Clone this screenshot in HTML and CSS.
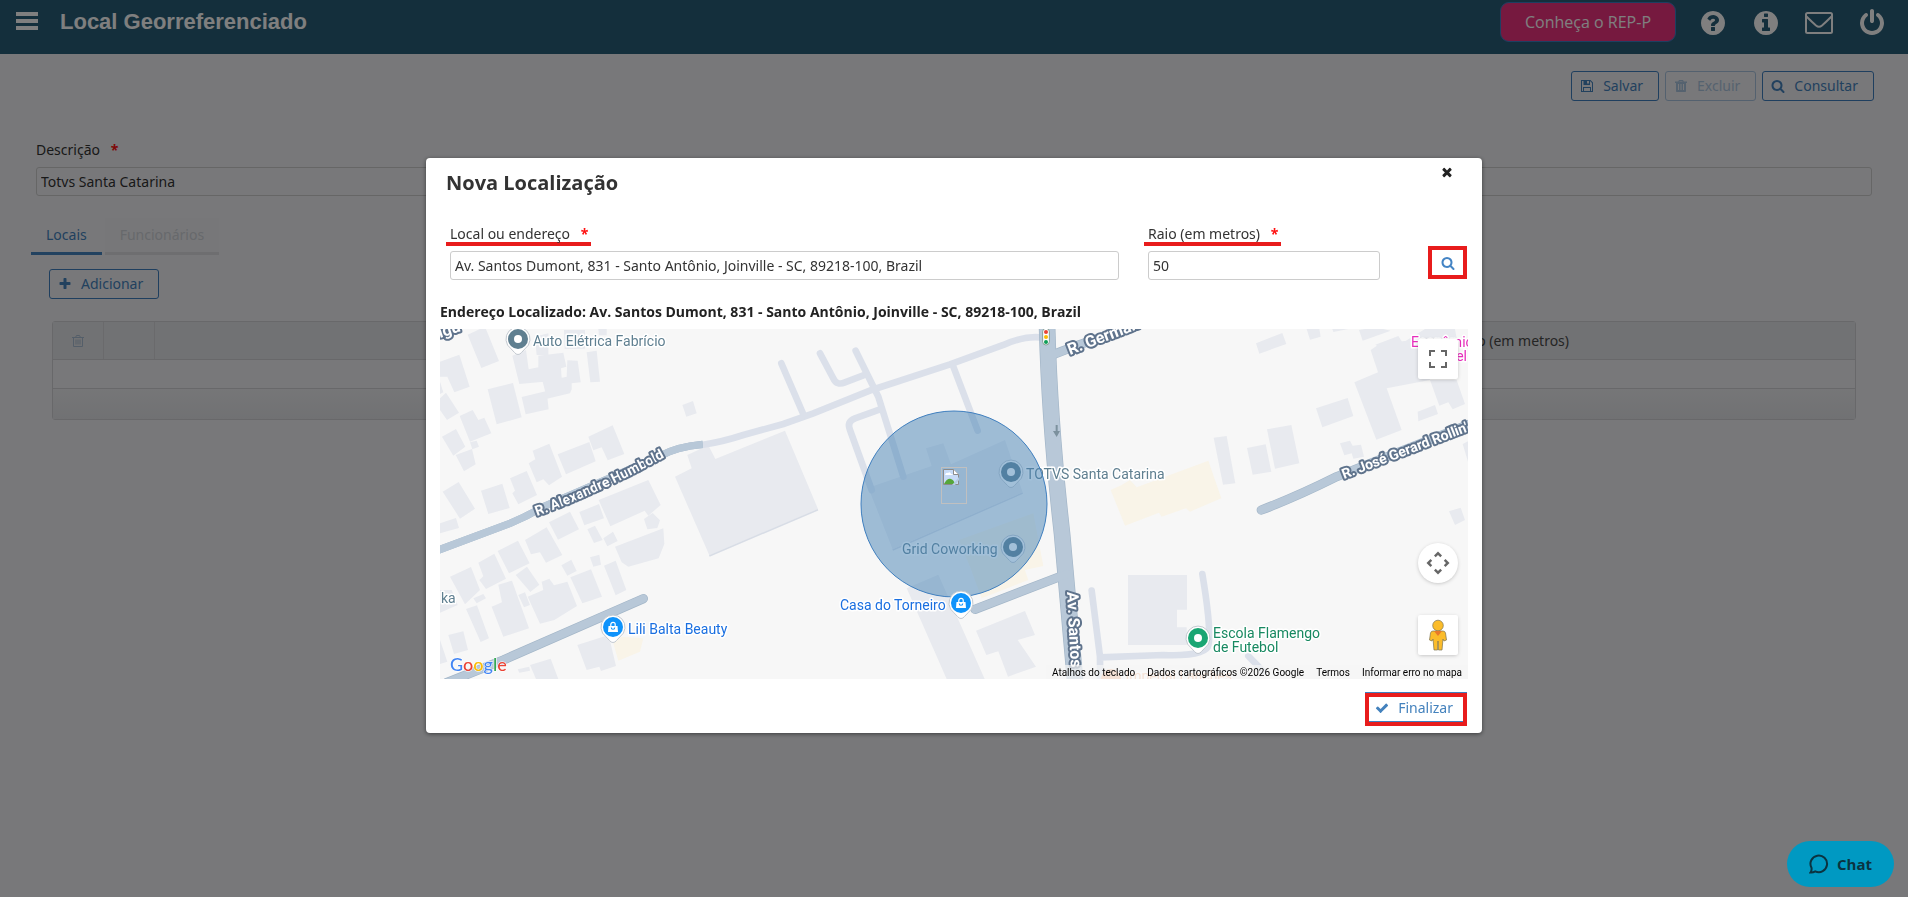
FILE: index.html
```html
<!DOCTYPE html>
<html lang="pt-BR">
<head>
<meta charset="utf-8">
<meta name="viewport" content="width=device-width, initial-scale=1">
<title>Local Georreferenciado</title>
<link rel="stylesheet" href="styles.css">
</head>
<body>
<svg class="defs" aria-hidden="true">
  <symbol id="i-search" viewBox="0 0 1792 1792"><path d="M1216 832q0-185-131.5-316.5t-316.5-131.5-316.5 131.5-131.5 316.5 131.5 316.5 316.5 131.5 316.5-131.5 131.5-316.5zm512 832q0 52-38 90t-90 38q-54 0-90-38l-343-342q-179 124-399 124-143 0-273.5-55.5t-225-150-150-225-55.5-273.5 55.5-273.5 150-225 225-150 273.5-55.5 273.5 55.5 225 150 150 225 55.5 273.5q0 220-124 399l343 343q37 37 37 90z"/></symbol>
  <symbol id="i-plus" viewBox="0 0 1792 1792"><path d="M1600 736v192q0 40-28 68t-68 28h-416v416q0 40-28 68t-68 28h-192q-40 0-68-28t-28-68v-416h-416q-40 0-68-28t-28-68v-192q0-40 28-68t68-28h416v-416q0-40 28-68t68-28h192q40 0 68 28t28 68v416h416q40 0 68 28t28 68z"/></symbol>
  <symbol id="i-check" viewBox="0 0 1792 1792"><path d="M1671 566q0 40-28 68l-724 724-136 136q-28 28-68 28t-68-28l-136-136-362-362q-28-28-28-68t28-68l136-136q28-28 68-28t68 28l294 295 656-657q28-28 68-28t68 28l136 136q28 28 28 68z"/></symbol>
  <symbol id="i-times" viewBox="0 0 1792 1792"><path d="M1490 1322q0 40-28 68l-136 136q-28 28-68 28t-68-28l-294-294-294 294q-28 28-68 28t-68-28l-136-136q-28-28-28-68t28-68l294-294-294-294q-28-28-28-68t28-68l136-136q28-28 68-28t68 28l294 294 294-294q28-28 68-28t68 28l136 136q28 28 28 68t-28 68l-294 294 294 294q28 28 28 68z"/></symbol>
  <symbol id="i-power" viewBox="0 0 1792 1792"><path d="M1664 896q0 156-61 298t-164 245-245 164-298 61-298-61-245-164-164-245-61-298q0-182 80.5-343t226.5-270q43-32 95.5-25t83.5 50q32 42 24.5 94.5t-49.5 84.5q-98 74-151.5 181t-53.5 228q0 104 40.5 198.5t109.5 163.5 163.5 109.5 198.5 40.5 198.5-40.5 163.5-109.5 109.5-163.5 40.5-198.5q0-121-53.5-228t-151.5-181q-42-32-49.5-84.5t24.5-94.5q31-43 84-50t95 25q146 109 226.5 270t80.5 343zm-640-768v640q0 52-38 90t-90 38-90-38-38-90v-640q0-52 38-90t90-38 90 38 38 90z"/></symbol>
  <symbol id="i-info" viewBox="0 0 1792 1792"><path d="M1152 1376v-160q0-14-9-23t-23-9h-96v-512q0-14-9-23t-23-9h-320q-14 0-23 9t-9 23v160q0 14 9 23t23 9h96v320h-96q-14 0-23 9t-9 23v160q0 14 9 23t23 9h448q14 0 23-9t9-23zm-128-896v-160q0-14-9-23t-23-9h-192q-14 0-23 9t-9 23v160q0 14 9 23t23 9h192q14 0 23-9t9-23zm640 416q0 209-103 385.5t-279.5 279.5-385.5 103-385.5-103-279.5-279.5-103-385.5 103-385.5 279.5-279.5 385.5-103 385.5 103 279.5 279.5 103 385.5z"/></symbol>
  <symbol id="i-help" viewBox="0 0 1792 1792"><path d="M1024 1376v-192q0-14-9-23t-23-9h-192q-14 0-23 9t-9 23v192q0 14 9 23t23 9h192q14 0 23-9t9-23zm256-672q0-88-55.5-163t-138.5-116-170-41q-243 0-371 213-15 24 8 42l132 100q7 6 19 6 16 0 25-12 53-68 86-92 34-24 86-24 48 0 85.5 26t37.5 59q0 38-20 61t-68 45q-63 28-115.5 86.5t-52.5 125.5v36q0 14 9 23t23 9h192q14 0 23-9t9-23q0-19 21.5-49.5t54.5-49.5q32-18 49-28.5t46-35 44.5-48 28-60.5 12.5-81zm384 192q0 209-103 385.5t-279.5 279.5-385.5 103-385.5-103-279.5-279.5-103-385.5 103-385.5 279.5-279.5 385.5-103 385.5 103 279.5 279.5 103 385.5z"/></symbol>
  <symbol id="i-mail" viewBox="0 0 28 28"><g fill="none" stroke="currentColor" stroke-width="2"><rect x="1" y="4" width="26" height="20" rx="1.500"/><path d="M1.500 7.500 Q7 13 11 16.500 Q14 19 17 16.500 Q21 13 26.500 7.500"/></g></symbol>
  <symbol id="i-save" viewBox="0 0 14 14"><path fill-rule="evenodd" d="M1 1h9.500L13 3.500V13H1zM2 2v10h1V8h8v4h1V4l-2-2v4H3.500V2zm5 0v2.500h2V2zM4 9v3h6V9z"/></symbol>
  <symbol id="i-trash" viewBox="0 0 14 14"><path fill-rule="evenodd" d="M5 1h4l.8 1.500H13V4h-1v8.200q0 .8-.8.800H2.800q-.8 0-.8-.8V4H1V2.500h3.200zM5.400 2.500h3.200L8.300 2H5.700zM4 5v6h1V5zm2.500 0v6h1V5zM9 5v6h1V5z"/></symbol>
  <symbol id="i-trash-o" viewBox="0 0 14 14"><path fill="none" stroke="currentColor" d="M1 3.500h12M2.500 3.500v9h9v-9M4.500 3.500l1-2h3l1 2M5 5.500v5M7 5.500v5M9 5.500v5"/></symbol>
  <symbol id="pin" viewBox="-14 -14 28 32" overflow="visible"><path class="pin-body" d="M0 15.500Q-2 15.500-3.500 13.500L-7 9.800A12 12 0 1 1 7 9.800L3.500 13.500Q2 15.500 0 15.500z"/><circle r="10" fill="currentColor"/></symbol>
  <symbol id="bag" viewBox="-7 -7 14 14"><path fill="#fff" fill-rule="evenodd" d="M-4.500-1h9L5 5H-5zM-2.300.5A2.300 2.300 0 0 0 2.300.5H1.200A1.200 1.200 0 0 1-1.200.5z"/><path fill="none" stroke="#fff" stroke-width="1.200" d="M-2.200-1v-1.500a2.200 2.200 0 0 1 4.400 0V-1"/></symbol>
</svg>

<header class="topbar">
  <button class="menu" type="button" aria-label="Menu"><svg viewBox="0 0 22 18"><path d="M0 0h22v4H0zM0 7h22v4H0zM0 14h22v4H0z"/></svg></button>
  <h1 class="topbar-title">Local Georreferenciado</h1>
  <button class="promo" type="button">Conheça o REP-P</button>
  <nav class="topbar-icons">
    <a href="#" aria-label="Ajuda"><svg><use href="#i-help"/></svg></a>
    <a href="#" aria-label="Informações"><svg><use href="#i-info"/></svg></a>
    <a href="#" aria-label="Mensagens"><svg><use href="#i-mail"/></svg></a>
    <a href="#" aria-label="Sair"><svg><use href="#i-power"/></svg></a>
  </nav>
</header>

<main class="page">
  <div class="actions">
    <button class="btn" type="button"><svg><use href="#i-save"/></svg>Salvar</button>
    <button class="btn" type="button" disabled><svg><use href="#i-trash"/></svg>Excluir</button>
    <button class="btn" type="button"><svg><use href="#i-search"/></svg>Consultar</button>
  </div>
  <label class="label" for="descricao">Descrição <b class="req">*</b></label>
  <input class="input" id="descricao" type="text" value="Totvs Santa Catarina">
  <div class="tabs" role="tablist">
    <button class="tab tab-active" type="button" role="tab" aria-selected="true">Locais</button>
    <button class="tab" type="button" role="tab" disabled>Funcionários</button>
  </div>
  <section class="panel">
    <button class="btn" type="button"><svg><use href="#i-plus"/></svg>Adicionar</button>
    <table class="grid">
      <thead><tr><th class="col-icon"><svg class="trash"><use href="#i-trash-o"/></svg></th><th class="col-icon"></th><th></th><th class="col-radius">Raio (em metros)</th></tr></thead>
      <tbody><tr><td colspan="4"></td></tr></tbody>
      <tfoot><tr><td colspan="4"></td></tr></tfoot>
    </table>
  </section>
</main>

<div class="overlay">
  <section class="modal" role="dialog" aria-labelledby="modal-title">
    <header class="modal-head">
      <h2 class="modal-title" id="modal-title">Nova Localização</h2>
      <button class="close" type="button" aria-label="Fechar"><svg><use href="#i-times"/></svg></button>
    </header>
    <form class="form">
      <div class="field field-address">
        <label class="label marked" for="endereco">Local ou endereço <b class="req">*</b></label>
        <input class="input" id="endereco" type="text" value="Av. Santos Dumont, 831 - Santo Antônio, Joinville - SC, 89218-100, Brazil">
      </div>
      <div class="field field-radius">
        <label class="label marked" for="raio">Raio (em metros) <b class="req">*</b></label>
        <input class="input" id="raio" type="text" value="50">
      </div>
      <button class="search" type="button" aria-label="Pesquisar"><svg><use href="#i-search"/></svg></button>
    </form>
    <p class="found">Endereço Localizado: Av. Santos Dumont, 831 - Santo Antônio, Joinville - SC, 89218-100, Brazil</p>

    <div class="map">
      <svg class="map-art" viewBox="0 0 1028 350" preserveAspectRatio="xMidYMid slice">
        <g transform="translate(-10 -9) scale(.333333)">
          <g class="building">
            <path d="M113 44L165 20 207 123 154 144zM30 125L88 104 119 200 73 217 52 170 30 170zM30 235L48 218 87 278 51 300 30 270zM30 185L40 217 30 222zM173 208L249 189 275 292 200 313zM275 231L350 213 356 268 287 283zM247 107L288 90 296 148 325 142V107L400 98 409 140 393 145 395 175 342 185 268 192zM338 185L410 170 412 121 443 122 452 187 425 190 425 208 420 220 351 236zM314 50L355 40V105H320zM402 30H465V86L404 87zM470 97L500 92 510 185 481 187zM505 27H530V46H507zM89 288L128 270 145 300 163 293 184 340 120 365zM36 350L78 327 106 380 70 407zM77 405L126 387 137 433 102 454zM120 367L140 362 147 380 127 388zM383 403L478 366 497 424 408 463zM475 350L548 316 583 402 533 421 515 382 490 391zM308 392L358 371 396 470 357 496 340 478 320 487 296 430 316 418zM240 475L290 453 321 525 265 553 247 520 255 512zM153 512L217 491 239 564 175 582zM38 515L86 486 135 566 90 596zM30 610L78 594 87 624 30 640zM757 255L789 243 800 280 769 290zM506 540L655 480 692 555 655 587 644 572 541 619zM448 576L507 552 522 595 463 616zM357 607L420 575 447 628 384 659zM642 597L668 579 690 601 682 624 652 628zM472 628L495 617 518 660 492 669zM520 655L549 635 563 663 532 679zM555 680L700 625 703 672 686 715 595 740 575 727zM285 660L350 622 397 705 348 728 330 697 303 703zM203 693L264 662 299 730 237 760zM145 728L193 701 228 776 168 807 148 780 160 769zM60 770L123 741 150 810 105 853zM257 765L291 740 328 794 301 816zM394 736L424 719 440 753 412 767zM480 712L508 704 513 734 490 740zM522 737L557 722 589 810 557 826zM421 772L483 748 516 830 457 850zM335 785L358 776 372 796 412 785 441 858 373 900 330 911 293 830 340 810zM185 860L216 847 205 794 246 782 297 925 220 950zM265 825L285 817 300 855 282 862zM130 835L160 822 168 835 140 850zM108 867L141 856 177 955 152 966zM55 945L100 934 114 990 72 1002zM30 810L65 810 83 855 30 878zM30 960L52 1025 30 1032zM442 975L536 945 558 1038 513 1053 508 1040 470 1050zM300 1035L362 1016 385 1077H318zM263 1048L298 1040 300 1052 268 1058z"/>
            <path d="M735 470L785 445 772 405 835 376 856 417 1065 332 1164 567 838 706z"/>
          </g>
          <path class="shade" d="M838 708L1164 569M1388 690L1778 519"/>
          <g transform="translate(1050 0)">
            <path class="building" d="M265 503L455 438 438 385 490 370 513 433 675 360 728 517 338 688zM380 805L475 764 614 1077H500zM588 932L735 873 765 945 713 960 768 1040 684 1070 655 994 619 1005zM1044 765V975H1150V765z"/>
            <path class="warm" d="M537 660L760 580 790 738 735 750 745 780 605 835 570 740z"/>
          </g>
          <g transform="translate(2070 0)">
            <path class="building" d="M408 70L487 39 499 72 418 101zM560 27H598L602 50 570 59zM637 27H685L640 36zM717 30L735 27H790L812 32 728 62zM766 74L835 48 848 68 915 27H1005L1010 55 895 95 834 118zM752 90L775 74 895 57 930 180 800 205 845 330 769 359 703 187 774 157zM930 180H1010L1035 252 998 268 985 247 958 257zM588 265L683 234 700 288 607 322zM893 275L945 255 954 282 895 304zM441 328L514 315 538 430 465 446zM281 353L320 348 346 490 309 494zM381 384L437 373 454 455 398 464zM660 370L690 362 698 377 723 374 732 410 700 416 695 400 673 406zM987 574L1022 563 1035 600 1005 615zM1028 372L1044 364V425zM24 765H201V869H171V922H200V975H24z"/>
            <path class="warm" d="M-28 510L5 495 30 480 50 502 265 422 304 535 210 575 198 565 125 590 117 578 15 617z"/>
          </g>
          <path class="warm" d="M550 970L575 950 640 955 630 995 565 1022z"/>
          <g class="minor">
            <path d="M815 375Q880 365 940 345L1060 312 1150 280 1325 210 1560 133 1720 75Q1780 48 1830 52"/>
            <path d="M1054 130L1121 285M1170 100L1210 175Q1220 198 1245 187L1300 166M1277 92L1345 230 1420 470M1350 268L1275 295Q1250 305 1260 330L1325 510M1570 140L1643 332"/>
            <path d="M1985 812L2010 1010 2010 1075M2010 1012L2200 1005Q2330 1010 2335 975 2345 930 2317 762M2455 1008L2500 1055"/>
          </g>
          <g class="road-edge"><path class="blunt" d="M10 696L240 610Q290 590 340 560L480 500 690 408Q740 380 818 373"/><path d="M50 1088L220 1020 640 836M2494 570Q2600 530 2720 470L3120 312"/><path class="wide" d="M1851 10Q1858 300 1896 640L1936 1090"/><path d="M1635 868L1910 762M1855 110Q1950 70 2100 25"/></g>
          <g class="road"><path class="blunt" d="M10 696L240 610Q290 590 340 560L480 500 690 408Q740 380 818 373"/><path d="M50 1088L220 1020 640 836M2494 570Q2600 530 2720 470L3120 312"/><path class="wide" d="M1851 10Q1858 300 1896 640L1936 1090"/><path d="M1635 868L1910 762M1855 110Q1950 70 2100 25"/></g>
          <path class="arrow" d="M1877 315h6v18h7l-10 18-11-18h8z"/>
          <rect x="1838" y="25" width="20" height="50" rx="10" fill="#fff" stroke="#5f7d6d" stroke-width="2"/>
          <circle cx="1848" cy="36" r="6" fill="#e94335"/><circle cx="1848" cy="51" r="6" fill="#fbbc05"/><circle cx="1848" cy="66" r="6" fill="#0f9d58"/>
        </g>

        <path id="humbold" d="M97 187Q166 162 245 117" fill="none"/>
        <g class="street">
          <text><textPath href="#humbold">R. Alexandre Humbold</textPath></text>
          <text class="avenue" transform="translate(630 26) rotate(-21)">R. Germano</text>
          <text class="avenue" transform="translate(627 263) rotate(87)">Av. Santos</text>
          <text transform="translate(904 150) rotate(-21)">R. José Gerard Rollin'</text>
          <text class="avenue" transform="translate(0 9) rotate(-18)">igu</text>
        </g>

        <g class="poi slate">
          <use href="#pin" x="64" y="-4" width="28" height="32"/><circle class="hole" cx="78" cy="10" r="4"/>
          <text x="93" y="17">Auto Elétrica Fabrício</text>
          <text x="1" y="274">ka</text>
          <use href="#pin" x="557" y="129" width="28" height="32"/><circle class="hole" cx="571" cy="143" r="4"/>
          <text x="586" y="150">TOTVS Santa Catarina</text>
          <use href="#pin" x="559" y="204" width="28" height="32"/><circle class="hole" cx="573" cy="218" r="4"/>
          <text x="462" y="225">Grid Coworking</text>
        </g>
        <g class="poi pink"><text x="971" y="18">Econômico</text><text x="1027" y="32" text-anchor="end">Hotel</text></g>
        <g class="poi orange"><circle cx="671" cy="350" r="10" fill="currentColor"/><text x="792" y="352" text-anchor="end">Imperial Lanches</text></g>

        <circle class="radius" cx="514" cy="175" r="93"/>

        <g class="poi blue">
          <use href="#pin" x="159" y="284" width="28" height="32"/><use href="#bag" x="166" y="291" width="14" height="14"/>
          <text x="188" y="305">Lili Balta Beauty</text>
          <use href="#pin" x="507" y="260" width="28" height="32"/><use href="#bag" x="514" y="267" width="14" height="14"/>
          <text x="400" y="281">Casa do Torneiro</text>
        </g>
        <g class="poi green">
          <use href="#pin" x="744" y="295" width="28" height="32"/><circle class="hole" cx="758" cy="309" r="4"/>
          <text x="773" y="309">Escola Flamengo</text><text x="773" y="323">de Futebol</text>
        </g>

        <g transform="translate(501 138)">
          <rect x=".5" y=".5" width="25" height="36" fill="none" stroke="#c0c0c0"/>
          <path d="M2.500 2.500h10l5 5v10h-15z" fill="#c7dbf7" stroke="#8b8b8b"/>
          <path d="M3 17q3-6 7-5 3 1 4 5z" fill="#56a63a"/><path d="M4 8q1-3 3-2 2-2 3 1 2 0 2 1z" fill="#fff"/><path d="M12.500 2.500v5h5" fill="#fff" stroke="#8b8b8b"/><path d="M11 18L18 10v3l-4 5z" fill="#b4cbe2"/>
        </g>
        <text class="google" x="10" y="342"><tspan fill="#4285f4">G</tspan><tspan fill="#ea4335">o</tspan><tspan fill="#fbbc05">o</tspan><tspan fill="#4285f4">g</tspan><tspan fill="#34a853">l</tspan><tspan fill="#ea4335">e</tspan></text>
      </svg>
      <div class="map-controls">
        <button class="ctl" type="button" aria-label="Tela cheia"><svg viewBox="0 0 18 18"><path d="M0 0h6v2H2v4H0zM12 0h6v6h-2V2h-4zM0 12h2v4h4v2H0zM16 12h2v6h-6v-2h4z"/></svg></button>
        <button class="ctl ctl-round" type="button" aria-label="Controles da câmera"><svg viewBox="0 0 24 24"><path d="M12 .5l4 4L14.300 6.200 12 4 9.700 6.200 8 4.500zM12 23.500l4-4-1.700-1.700L12 20l-2.300-2.200L8 19.500zM.5 12l4-4 1.700 1.700L4 12l2.200 2.300L4.500 16zM23.500 12l-4-4-1.700 1.700L20 12l-2.200 2.300 1.700 1.700z"/></svg></button>
        <button class="ctl" type="button" aria-label="Street View"><svg class="pegman" viewBox="0 0 18 32"><g stroke="#7d7350" stroke-width=".7"><path fill="#fbbc2a" d="M4 12q-2 0-2.500 2L.5 21l2.500 1 1-2 1 11h3.500l.5-9 .5 9H13l1-11 1 2 2.500-1-1-7q-.5-2-2.500-2z"/><circle cx="9" cy="6.500" r="5.300" fill="#fbbc2a"/></g><path fill="#e8792a" d="M5 12h8l-4 5z"/></svg></button>
      </div>
      <div class="map-legal"><button type="button">Atalhos do teclado</button><span>Dados cartográficos ©2026 Google</span><a href="#">Termos</a><a href="#">Informar erro no mapa</a></div>
    </div>

    <footer class="modal-foot">
      <div class="highlight"><button class="btn finish" type="button"><svg><use href="#i-check"/></svg>Finalizar</button></div>
    </footer>
  </section>
</div>

<button class="chat" type="button"><svg viewBox="0 0 20 20"><path d="M2.500 13.800A8.300 8.300 0 1 1 6.200 17.300Q4 18.700 1.500 18.500 3 16.500 2.500 13.800z"/></svg>Chat</button>
</body>
</html>
```
FILE: styles.css
```css
* { box-sizing: border-box; }

body {
  margin: 0;
  min-height: 100vh;
  background: #f0f1f5;
  color: #333;
  font: 14px/20px "Noto Sans", "Open Sans", sans-serif;
}

button, input { font: inherit; color: inherit; }
button { cursor: pointer; }
svg { display: block; fill: currentColor; }
.defs { position: absolute; width: 0; height: 0; }

/* Top bar */
.topbar {
  display: flex;
  align-items: flex-start;
  height: 54px;
  padding: 0 22px 0 16px;
  background: #285e78;
  color: #fff;
}
.menu { padding: 0; margin-top: 12px; border: 0; background: none; }
.menu svg { width: 22px; height: 18px; }
.topbar-title { margin: 0 auto 0 22px; font: bold 22px/44px "Liberation Sans", Arial, sans-serif; }
.promo {
  height: 40px;
  margin-top: 2px;
  padding: 0 24px;
  border: 1px solid #3b7fc4;
  border-radius: 9px;
  background: #ec327e;
  font-family: "Open Sans", sans-serif;
  font-size: 16px;
}
.topbar-icons { display: flex; gap: 25px; margin: 9px 0 0 23px; }
.topbar-icons a { color: inherit; }
.topbar-icons svg { width: 28px; height: 28px; }

/* Page form */
.page { padding: 17px 36px; }
.actions { display: flex; justify-content: flex-end; gap: 6px; margin: 0 -2px 39px 0; }
.btn {
  display: inline-flex;
  align-items: center;
  gap: 9px;
  height: 30px;
  padding: 0 15px 0 8px;
  border: 1px solid #3f7fbf;
  border-radius: 3px;
  background: none;
  color: #4482bd;
}
.btn svg { width: 14px; height: 14px; }
.btn:disabled { opacity: .4; }
.label { display: block; }
.req { margin-left: 7px; color: #f11; }
.input {
  width: 100%;
  height: 29px;
  padding: 0 4px;
  border: 1px solid #ccc;
  border-radius: 3px;
  background: none;
}
.page .input { margin-top: 7px; }
.tabs { display: flex; gap: 3px; margin: 22px -5px 0; }
.tab {
  height: 37px;
  padding: 0 15px;
  border: 0;
  border-bottom: 3px solid #dcdde0;
  background: #eeeff2;
  color: #cfd2d8;
}
.tab-active { border-color: #4484c0; background: none; color: #4482bd; }
.panel { padding: 14px 16px 0; }
.panel .btn { margin-left: -3px; }
.grid {
  width: 100%;
  margin-top: 22px;
  border: 1px solid #d0d1d5;
  border-collapse: separate;
  border-spacing: 0;
  border-radius: 3px;
  table-layout: fixed;
}
.grid th { height: 37px; padding: 0; border-right: 1px solid #d4d5d9; background: #e3e4e8; font-weight: normal; color: #4a4a4a; }
.grid th:last-child { border-right: 0; }
.grid td { height: 29px; padding: 0; border-top: 1px solid #d0d1d5; }
.grid tfoot td { height: 31px; background: linear-gradient(#ecedf0, #e2e3e7); }
.grid .col-icon { width: 51px; }
.col-radius { width: 684px; }
.trash { width: 14px; height: 14px; margin: 0 auto; color: #a9bdd2; }

/* Dialog */
.overlay {
  position: fixed;
  inset: 0;
  display: flex;
  justify-content: center;
  align-items: flex-start;
  padding-top: 158px;
  background: rgba(0, 0, 0, .5);
}
.modal {
  width: 1056px;
  max-width: 94%;
  border-radius: 4px;
  background: #fff;
  box-shadow: 0 1px 4px rgba(0, 0, 0, .5);
}
.modal-head { display: flex; justify-content: space-between; padding: 7px 28px 0 20px; }
.modal-title { margin: 0; font: bold 20px/36px "Open Sans", sans-serif; }
.close { align-self: flex-start; padding: 0; border: 0; background: none; color: #222; }
.close svg { width: 14px; height: 14px; }
.form { display: flex; align-items: flex-end; padding: 21px 15px 0 20px; }
.field-address { flex: 1; margin-right: 22px; padding-right: 3px; }
.field-radius { width: 240px; margin-right: 44px; padding-right: 4px; }
.field .input { width: calc(100% - 4px); margin: 5px 0 0 4px; display: block; }
.marked { display: table; padding: 3px 3px 0 4px; border-bottom: 4px solid #e81c1c; line-height: 17px; }
.search {
  display: grid;
  place-items: center;
  width: 39px;
  height: 33px;
  margin-bottom: 1px;
  padding: 0;
  border: 4px solid #e81c1c;
  background: none;
  color: #4484c4;
}
.search svg { width: 14px; height: 14px; }
.found { margin: 21px 14px 6px; font-family: "Open Sans", sans-serif; font-weight: bold; line-height: 22px; color: #222; }
.modal-foot { display: flex; justify-content: flex-end; padding: 14px 15px 7px; }
.highlight { border: 4px solid #e81c1c; box-shadow: 0 -1px 0 #3f7fbf; }
.finish { height: 25px; padding: 0 10px 2px 6px; border-width: 0 0 1px; border-radius: 0; }

/* Map */
.map { position: relative; height: 350px; margin: 0 14px; overflow: hidden; background: #f7f7f7; }
.map-art { width: 100%; height: 100%; }
.building { fill: #e8eaef; }
.shade { stroke: #d8dde6; stroke-width: 5; }
.warm { fill: #f9f4e8; }
.minor, .road, .road-edge { fill: none; stroke-linecap: round; }
.minor { stroke: #dbe0ea; stroke-width: 20; }
.road-edge { stroke: #a3b6c8; stroke-width: 28; }
.road { stroke: #b8c8d8; stroke-width: 24; }
.blunt { stroke-width: 22; stroke-linecap: butt; }
.road-edge .wide { stroke-width: 50; }
.road .wide { stroke-width: 46; }
.arrow { fill: #7c919e; }
.street { fill: #fff; stroke: #5f738c; stroke-width: 4px; paint-order: stroke; stroke-linejoin: round; font: bold 14px Roboto, sans-serif; }
.avenue { font-size: 16px; }
.poi { stroke-linejoin: round; font: 14px Roboto, sans-serif; }
.poi text { fill: currentColor; stroke: #fff; stroke-width: 3px; paint-order: stroke; }
.slate { color: #5f7f90; }
.pink { color: #e62ebb; }
.orange { color: #f3b58c; }
.blue { color: #0f93fb; }
.blue text { fill: #1a6fe0; }
.green { color: #1aa673; }
.green text { fill: #188961; }
.pin-body { fill: #fff; stroke: #c3c9d0; stroke-width: 1px; }
.hole { fill: #fff; }
.radius { fill: #4682b4; fill-opacity: .5; stroke: #3f7fbf; stroke-width: 1px; }
.google { font: 500 18px Lato, sans-serif; stroke: #fff; stroke-width: 1px; paint-order: stroke; }
.map-controls {
  position: absolute;
  inset: 10px 10px 24px auto;
  display: flex;
  flex-direction: column;
  gap: 32px;
}
.ctl {
  display: grid;
  place-items: center;
  width: 40px;
  height: 40px;
  padding: 0;
  border: 0;
  border-radius: 2px;
  background: #fff;
  box-shadow: 0 1px 4px -1px rgba(0, 0, 0, .3);
  color: #666;
}
.ctl svg { width: 18px; height: 18px; }
.ctl-round { margin-top: auto; border-radius: 50%; }
.ctl-round svg { width: 24px; height: 24px; }
.ctl .pegman { width: 18px; height: 32px; }
.map-legal {
  position: absolute;
  right: 0;
  bottom: 0;
  display: flex;
  gap: 12px;
  padding: 1px 6px 0;
  background: rgba(245, 245, 245, .7);
  font: 10px/13px Roboto, sans-serif;
  color: #000;
}
.map-legal a { color: inherit; text-decoration: none; }
.map-legal button { padding: 0; border: 0; background: none; }

/* Chat */
.chat {
  position: fixed;
  right: 14px;
  bottom: 10px;
  display: flex;
  align-items: center;
  gap: 8px;
  height: 46px;
  padding: 0 22px;
  border: 0;
  border-radius: 23px;
  background: #0099c2;
  color: #0b3340;
  font: bold 15px/20px "Open Sans", sans-serif;
}
.chat svg { width: 20px; height: 20px; fill: none; stroke: currentColor; stroke-width: 2; }
```
